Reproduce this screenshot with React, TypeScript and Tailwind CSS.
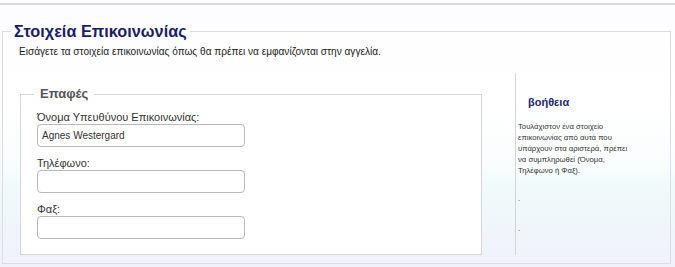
export default function App() {
  const lines = [
    "Τουλάχιστον ένα στοιχείο",
    "επικοινωνίας από αυτά που",
    "υπάρχουν στα αριστερά, πρέπει",
    "να συμπληρωθεί (Όνομα,",
    "Τηλέφωνο ή Φαξ).",
  ];
  return (
    <div className="w-[675px] h-[267px] overflow-hidden bg-[linear-gradient(to_bottom,#fdfdff_0%,#ffffff_40%,#fafdfd_60%,#f0fafa_70%,#f1f1fb_100%)] font-['Liberation_Sans',Arial,sans-serif] text-[#333]">
      <div className="h-[3px]" />
      <div className="h-[2px] bg-[#d6dbe9]" />
      <fieldset className="ml-[2px] mt-[16px] w-[669px] h-[243px] border border-[#dcdce6]">
        <legend className="ml-[8px] px-[3px] text-[16.3px] leading-[20px] font-bold text-[#1c1c6c]">
          Στοιχεία Επικοινωνίας
        </legend>
        <p className="pt-[4px] pl-[16px] text-[10.1px] leading-[14px] text-[#222]">
          Εισάγετε τα στοιχεία επικοινωνίας όπως θα πρέπει να εμφανίζονται στην αγγελία.
        </p>
        <div className="mt-[14px] flex">
          <div className="w-[512px]">
            <fieldset className="mt-[13px] ml-[17px] w-[462px] h-[169px] border border-[#d6d6da] bg-white">
              <legend className="ml-[13px] px-[6px] text-[13px] leading-[16px] font-bold text-[#555]">
                Επαφές
              </legend>
              <div className="pl-[16px] pt-[9px] text-[11px] text-[#333]">
                <div className="leading-[12px]">Όνομα Υπευθύνου Επικοινωνίας:</div>
                <div className="mt-[1px] w-[208px] h-[23px] rounded-[4px] border border-[#b9b9bd] bg-white pl-[4px] text-[10px] leading-[21px]">
                  Agnes Westergard
                </div>
                <div className="mt-[10px] leading-[12px]">Τηλέφωνο:</div>
                <div className="mt-[1px] w-[208px] h-[23px] rounded-[4px] border border-[#b9b9bd] bg-white" />
                <div className="mt-[10px] leading-[12px]">Φαξ:</div>
                <div className="mt-[1px] w-[208px] h-[23px] rounded-[4px] border border-[#b9b9bd] bg-white" />
              </div>
            </fieldset>
          </div>
          <div className="w-[154px] h-[182px] border-l border-[#d4d4dc] pl-[2px]">
            <div className="mt-[22px] ml-[10px] text-[11px] leading-[14px] font-bold text-[#24247a]">βοήθεια</div>
            <div className="mt-[12px] text-[7.7px] leading-[11px] text-[#333]">
              {lines.map((l) => (
                <div key={l}>{l}</div>
              ))}
              <div className="mt-[17px]">.</div>
              <div className="mt-[19px]">.</div>
            </div>
          </div>
        </div>
      </fieldset>
    </div>
  );
}
